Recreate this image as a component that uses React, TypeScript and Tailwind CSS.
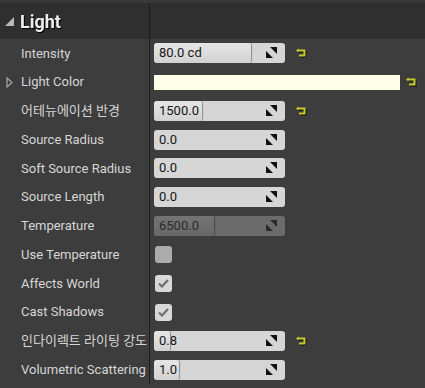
import React from "react";

type Row =
  | { label: string; kind: "num"; value: string; fill: number; reset?: boolean; disabled?: boolean }
  | { label: string; kind: "color" }
  | { label: string; kind: "check"; checked: boolean };

const rows: Row[] = [
  { label: "Intensity", kind: "num", value: "80.0 cd", fill: 97, reset: true },
  { label: "Light Color", kind: "color" },
  { label: "어테뉴에이션 반경", kind: "num", value: "1500.0", fill: 48, reset: true },
  { label: "Source Radius", kind: "num", value: "0.0", fill: 0 },
  { label: "Soft Source Radius", kind: "num", value: "0.0", fill: 0 },
  { label: "Source Length", kind: "num", value: "0.0", fill: 0 },
  { label: "Temperature", kind: "num", value: "6500.0", fill: 60, disabled: true },
  { label: "Use Temperature", kind: "check", checked: false },
  { label: "Affects World", kind: "check", checked: true },
  { label: "Cast Shadows", kind: "check", checked: true },
  { label: "인다이렉트 라이팅 강도", kind: "num", value: "0.8", fill: 16, reset: true },
  { label: "Volumetric Scattering", kind: "num", value: "1.0", fill: 25 },
];

function ResetIcon() {
  return (
    <svg width="11" height="10" viewBox="0 0 11 10" className="drop-shadow-[1px_1px_0_#111]">
      <path d="M1.5 2.5 H8.5 V7.5 H3" fill="none" stroke="#c9c92c" strokeWidth="2" />
      <path d="M0 2.5 L2.5 0.5 L2.5 4.5 Z" fill="#c9c92c" />
    </svg>
  );
}

function SpinIcon({ dim }: { dim?: boolean }) {
  const c = dim ? "#2a2a2a" : "#111";
  return (
    <svg width="11" height="11" viewBox="0 0 11 11">
      <path d="M4 0 H11 V7 Z" fill={c} />
      <path d="M0 4 V11 H7 Z" fill={c} />
    </svg>
  );
}

function NumField({ value, fill, disabled }: { value: string; fill: number; disabled?: boolean }) {
  return (
    <div
      className={`relative h-5 w-[131px] rounded-[3px] overflow-hidden ${
        disabled ? "bg-[#6b6b6b]" : "bg-[#d6d6d6]"
      }`}
    >
      {fill > 0 && (
        <div
          className={`absolute left-0 top-0 h-full rounded-[3px] shadow-[1px_0_1px_rgba(0,0,0,0.35)] ${
            disabled ? "bg-gradient-to-b from-[#747474] to-[#686868]" : "bg-gradient-to-b from-[#e6e6e6] to-[#d2d2d2]"
          }`}
          style={{ width: `${fill}px` }}
        />
      )}
      <span
        className={`absolute left-[5px] top-0 leading-5 text-[13px] ${
          disabled ? "text-[#2c2c2c]" : "text-[#161616]"
        }`}
      >
        {value}
      </span>
      <span className="absolute right-[8px] top-[4px] flex">
        <SpinIcon dim={disabled} />
      </span>
    </div>
  );
}

function Check({ checked }: { checked: boolean }) {
  return (
    <div
      className={`w-[17px] h-[17px] rounded-[3px] flex items-center justify-center ${
        checked ? "bg-[#d8d8d8]" : "bg-[#ababab]"
      }`}
    >
      {checked && (
        <svg width="11" height="9" viewBox="0 0 11 9">
          <path d="M1 4.5 L4 7.5 L10 1" fill="none" stroke="#707070" strokeWidth="2.2" />
        </svg>
      )}
    </div>
  );
}

export default function App() {
  return (
    <div
      className="w-[425px] h-[388px] bg-[#3d3d3d] overflow-hidden"
      style={{ fontFamily: "Roboto, 'Noto Sans CJK KR', sans-serif" }}
    >
      <div className="h-[3px] bg-[#383838]" />
      <div className="flex h-[36px] bg-[#2f2f2f]">
        <div className="w-[149px] flex items-center pl-[5px] gap-[6px]">
          <svg width="9" height="9" viewBox="0 0 9 9">
            <path d="M9 0 V9 H0 Z" fill="#b8b8b8" />
          </svg>
          <span className="text-[18px] font-bold text-[#eeeeee] drop-shadow-[1px_1px_0_#000]">Light</span>
        </div>
        <div className="w-px bg-[#1d1d1d]" />
        <div className="flex-1" />
      </div>
      <div className="flex">
        <div className="w-[149px]">
          {rows.map((r) => (
            <div key={r.label} className="h-[28.75px] flex items-center relative pl-[21px]">
              {r.kind === "color" && (
                <svg width="7" height="11" viewBox="0 0 7 11" className="absolute left-[6px] top-[9px]">
                  <path d="M1 1 L6 5.5 L1 10 Z" fill="none" stroke="#a8a8a8" strokeWidth="1.2" />
                </svg>
              )}
              <span className="text-[13px] text-[#d6d6d6] whitespace-nowrap">{r.label}</span>
            </div>
          ))}
        </div>
        <div className="w-px bg-[#1d1d1d]" />
        <div className="flex-1">
          {rows.map((r) => (
            <div key={r.label} className="h-[28.75px] flex items-center pl-[4px]">
              {r.kind === "num" && (
                <>
                  <NumField value={r.value} fill={r.fill} disabled={r.disabled} />
                  {r.reset && (
                    <span className="ml-[11px] flex">
                      <ResetIcon />
                    </span>
                  )}
                </>
              )}
              {r.kind === "color" && (
                <>
                  <div className="h-[15px] w-[246px] bg-[#fffee8]" />
                  <span className="ml-[6px] flex">
                    <ResetIcon />
                  </span>
                </>
              )}
              {r.kind === "check" && (
                <span className="ml-[1px] flex">
                  <Check checked={r.checked} />
                </span>
              )}
            </div>
          ))}
        </div>
      </div>
    </div>
  );
}
